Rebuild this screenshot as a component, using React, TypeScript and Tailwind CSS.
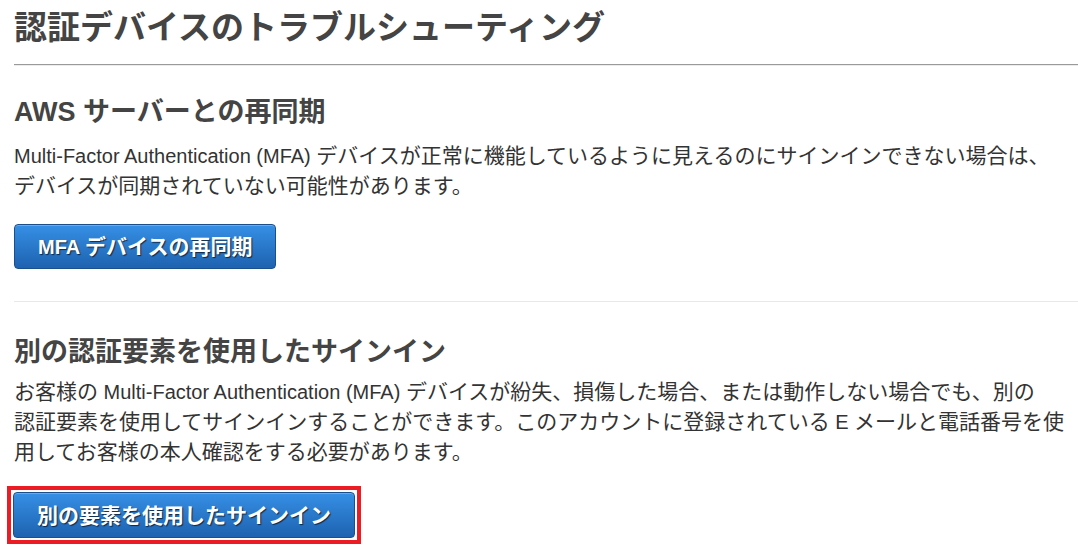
import React from "react";

const FONT = "font-['Liberation_Sans','Noto_Sans_CJK_JP',sans-serif]";

function BlueButton({ children, tall }: { children: React.ReactNode; tall?: boolean }) {
  return (
    <button
      className={`${tall ? "h-[46px]" : "h-[45px]"} px-[23px] rounded-[4px] border border-[#1b4f8c] bg-gradient-to-b from-[#3690e6] to-[#1e62b0] text-white text-[21px] font-bold leading-none whitespace-nowrap [text-shadow:1px_1px_1px_rgba(0,0,0,0.65)] shadow-[inset_0_1px_0_rgba(255,255,255,0.25)]`}
    >
      {children}
    </button>
  );
}

export default function App() {
  return (
    <div className={`w-[1078px] h-[552px] overflow-hidden bg-white pl-[14px] ${FONT}`}>
      <h1 className="pt-[8px] text-[33px] leading-[40px] font-bold text-[#444444] whitespace-nowrap">
        認証デバイスのトラブルシューティング
      </h1>
      <div className="mt-[16px] border-t border-[#9a9a9a] border-b border-b-[#ececec]" />

      <h2 className="mt-[29px] text-[27px] leading-[34px] font-bold text-[#444444] whitespace-nowrap">
        AWS サーバーとの再同期
      </h2>
      <p className="mt-[12px] text-[21px] leading-[30px] text-[#333333] whitespace-nowrap">
        <span className="text-[20px]">Multi-Factor Authentication (MFA) </span>
        デバイスが正常に機能しているように見えるのにサインインできない場合は、
        <br />
        デバイスが同期されていない可能性があります。
      </p>
      <div className="mt-[23px]">
        <BlueButton>
          <span className="text-[20px]">MFA </span>デバイスの再同期
        </BlueButton>
      </div>

      <div className="mt-[32px] border-t border-[#e8e8e8]" />

      <h2 className="mt-[33px] text-[27px] leading-[34px] font-bold text-[#444444] whitespace-nowrap">
        別の認証要素を使用したサインイン
      </h2>
      <p className="mt-[8px] text-[21px] leading-[30px] text-[#333333] whitespace-nowrap">
        お客様の<span className="text-[20px]"> Multi-Factor Authentication (MFA) </span>
        デバイスが紛失、損傷した場合、または動作しない場合でも、別の
        <br />
        認証要素を使用してサインインすることができます。このアカウントに登録されている
        <span className="text-[20px]"> E </span>
        メールと電話番号を使
        <br />
        用してお客様の本人確認をする必要があります。
      </p>
      <div className="mt-[19px] -ml-[7px] inline-block border-4 border-[#ec1c24] p-[2px]">
        <BlueButton tall>別の要素を使用したサインイン</BlueButton>
      </div>
    </div>
  );
}
